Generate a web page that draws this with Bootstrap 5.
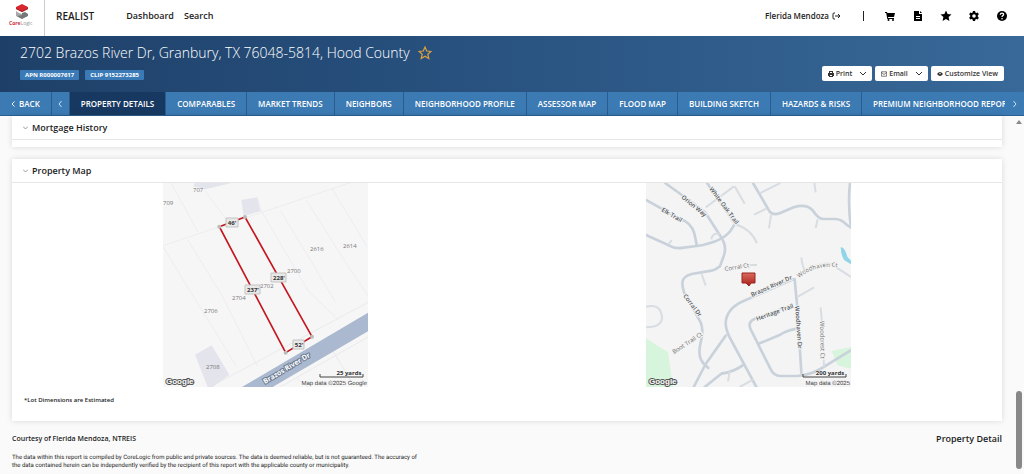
<!DOCTYPE html>
<html lang="en">
<head>
<meta charset="utf-8">
<meta name="viewport" content="width=device-width, initial-scale=1">
<title>Realist - Property Detail</title>
<link rel="stylesheet" href="https://cdn.jsdelivr.net/npm/bootstrap@5.3.0/dist/css/bootstrap.min.css">
<style>
body{font-family:"Open Sans","Noto Sans",sans-serif;font-size:8px;line-height:12px;color:#1c1c1c;background:#fafafa;overflow:hidden}
a{color:inherit;text-decoration:none}
svg{display:block;flex:none}
button{font:inherit;color:inherit}
.topbar{height:36px;background:#fff;padding-bottom:4px}
.logo-box{width:45px;height:36px;margin-bottom:-4px;border-right:1px solid #ccc}
.app-name{font-size:10px;line-height:16px;font-weight:600;margin-left:11px}
.main-links{font-size:9px;font-weight:600;margin-left:32px;gap:10px}
.user-link{font-weight:600;gap:3px}
.divider{width:1px;height:10px;background:#222;margin-left:22px}
.tool-links{gap:16px;margin-left:20px;margin-right:16px}
.tool-links a{width:12px}
.banner{height:56px;padding:6px 20px 0;background:linear-gradient(90deg,#1e4068,#28517f 45%,#386998)}
.banner h1{font-size:14px;line-height:21px;font-weight:300;color:#fff;margin:0}
.tags{gap:6px;margin-top:7px}
.tag{background:#3a7ab6;color:#fff;font-size:6px;line-height:10px;font-weight:700;border-radius:1px;padding:0 5px}
.acts{margin-top:24px;gap:3px}
.act{background:#fff;border:0;border-radius:2px;height:15px;padding:0 6px;gap:2px;font-size:7px;font-weight:600;color:#333;line-height:12px}
.chev{margin-left:6px}
.tabs{height:24px;background:#3b7ab3;color:#fff;font-size:8px;font-weight:600;border-bottom:1px solid #2b5f92}
.tabs a,.tabs button{display:flex;align-items:center;white-space:nowrap;flex:none;padding:0 11px;border:0;border-right:1px solid #2a5c8e;background:none}
.tabs .on{background:#173961}
.tabs button{padding:0;width:18px;justify-content:center}
.tabs .next{border:0;width:19px}
.content{padding:0 22px 0 12px}
.panel{background:#fff;box-shadow:0 0 6px #0002;margin-bottom:12px}
.panel-closed{padding-bottom:7px}
.panel h2{font-size:9px;line-height:12px;font-weight:600;height:24px;margin:0;padding:0 11px;gap:4px;border-bottom:1px solid #e6e6e6}
.maps{padding:0 12px}
.note{padding:7px 12px 15px;font-size:6px;font-weight:600}
.courtesy{font-size:7px;font-weight:600}
.doc-title{font-size:9px;font-weight:600}
.legal{font-family:Roboto,"Open Sans",sans-serif;font-size:6px;line-height:8px;margin:9px 0 0;text-rendering:geometricPrecision}
.track{width:10px;top:0;bottom:0;right:0}
.arrow-up{top:4px;right:2px}
.thumb{width:6px;height:78px;bottom:1px;right:2px;background:#888;border-radius:3px}
.place{font-family:"Open Sans",sans-serif;font-size:6px;fill:#777}
.street{font-family:"Open Sans",sans-serif;font-size:6px;font-weight:600;fill:#50565b;stroke:#f4f4f4;stroke-width:2px;paint-order:stroke}
.minor{font-weight:400;fill:#6c6c6c}
.road{font-size:7px;font-weight:700;fill:#fff;stroke:#68788f}
.dim{font-family:"Open Sans",sans-serif;font-size:6px;font-weight:700;fill:#333;text-anchor:middle}
.goog{font-family:"Liberation Sans",sans-serif;font-size:8px;font-weight:700;fill:#fff;stroke:#555;stroke-width:2px;paint-order:stroke}
.credit{font-family:"Liberation Sans",sans-serif;font-size:6px;fill:#444;text-anchor:end;text-rendering:geometricPrecision}
</style>
</head>
<body>
<header>
<div class="topbar d-flex align-items-center">
  <a href="#" class="logo-box d-flex justify-content-center" aria-label="CoreLogic">
    <svg width="44" height="36" viewBox="0 0 44 36"><path d="M22 4l6 3v2l-6 3-6-3V7z" fill="#d7282f"/><path d="M16 8l6 3 6-3v1l-6 3-6-3z" fill="#a91f27"/><path d="M16 11l3 2 3 1v5l-6-3z" fill="#aaa"/><path d="M22 13l3-1 3 2v2l-6 3-5-3 5-1z" fill="#777"/><text x="9" y="25" font-family="Open Sans" font-size="5" font-weight="700" fill="#c9303b">Core<tspan font-weight="400" fill="#999">Logic</tspan></text></svg>
  </a>
  <span class="app-name">REALIST</span>
  <nav class="main-links d-flex" aria-label="Main"><a href="#">Dashboard</a><a href="#">Search</a></nav>
  <a href="#" class="user-link ms-auto d-flex align-items-center">Flerida Mendoza
    <svg width="9" height="8" viewBox="0 0 9 8" fill="none" stroke="#222"><path d="M3 1H2Q1 1 1 2v4q0 1 1 1h1M3 4h5M6 2l2 2-2 2"/></svg></a>
  <span class="divider"></span>
  <div class="tool-links d-flex align-items-center">
    <a href="#" aria-label="Cart"><svg width="12" height="12" viewBox="0 0 12 12"><path d="M1 2h2l.3 1H11L10 7H4l.2 1H10v1H3.300L2.200 3H1z"/><circle cx="4.500" cy="10" r="1"/><circle cx="9" cy="10" r="1"/></svg></a>
    <a href="#" aria-label="Reports"><svg width="12" height="12" viewBox="0 0 12 12"><path fill-rule="evenodd" d="M2 1h5v3h3v7H2zm2 5v1h4V6zm0 2v1h4V8z"/><path d="M8 1l2 2H8z"/></svg></a>
    <a href="#" aria-label="Favorites"><svg width="12" height="12" viewBox="0 0 12 12"><path d="M6 .5l1.600 3.500 3.900.5-2.900 2.600.8 3.900L6 9.100 2.600 11l.8-3.900L.5 4.500 4.400 4z"/></svg></a>
    <a href="#" aria-label="Settings"><svg width="12" height="12" viewBox="0 0 12 12"><path fill-rule="evenodd" d="M5 1h2l.4 1.400 1 .6 1.400-.4 1 1.700-1 1.100v1.200l1 1.100-1 1.700L8.400 9l-1 .6L7 11H5l-.4-1.400-1-.6-1.400.4-1-1.700 1-1.100V5.400l-1-1.100 1-1.700 1.400.4 1-.6zm1 3.200a1.800 1.800 0 100 3.600 1.800 1.800 0 000-3.600z"/></svg></a>
    <a href="#" aria-label="Help"><svg width="12" height="12" viewBox="0 0 12 12"><circle cx="6" cy="6" r="5"/><path d="M4.300 4.700C4.400 2.500 7.800 2.700 7.600 4.600 7.500 5.600 6 5.700 6 7" fill="none" stroke="#fff" stroke-width="1.300"/><circle cx="6" cy="8.700" r=".8" fill="#fff"/></svg></a>
  </div>
</div>
<div class="banner d-flex justify-content-between">
  <div>
    <div class="d-flex align-items-center gap-2"><h1>2702 Brazos River Dr, Granbury, TX 76048-5814, Hood County</h1>
      <svg width="14" height="14" viewBox="0 0 14 14" fill="none" stroke="#dfa03c" stroke-width="1.200"><path d="M7 1l1.700 4 4.300.4-3.200 2.800 1 4.300L7 10.200 3.200 12.500l1-4.300L1 5.400 5.300 5z"/></svg></div>
    <div class="tags d-flex"><span class="tag">APN R000007617</span><span class="tag">CLIP 9152273285</span></div>
  </div>
  <div class="acts d-flex align-items-start">
    <button class="act d-flex align-items-center"><svg width="6" height="6" viewBox="0 0 6 6"><path fill="#333" fill-rule="evenodd" d="M1 0h4v2h1v3H5v1H1V5H0V2h1zm1 1v1h2V1zm0 3v1h2V4z"/></svg>Print<svg class="chev" width="6" height="4" fill="none" stroke="#333"><path d="M0 0l3 3 3-3"/></svg></button>
    <button class="act d-flex align-items-center"><svg width="6" height="6" viewBox="0 0 6 6" fill="none" stroke="#444" stroke-width=".7"><path d="M.4.8h5.200v4.400H.4zM.4 1.500L3 3.500l2.600-2"/></svg>Email<svg class="chev" width="6" height="4" fill="none" stroke="#333"><path d="M0 0l3 3 3-3"/></svg></button>
    <button class="act d-flex align-items-center"><svg width="6" height="6" viewBox="0 0 6 6"><path d="M0 3q3-4 6 0-3 4-6 0z" fill="#333"/><circle cx="3" cy="2.500" r=".7" fill="#fff"/></svg>Customize View</button>
  </div>
</div>
<nav class="tabs d-flex" aria-label="Report sections">
  <a href="#" class="back"><svg class="me-1" width="4" height="6" fill="none" stroke="#fff"><path d="M3.500.5L1 3l2.500 2.500"/></svg>BACK</a>
  <button aria-label="Previous tabs"><svg width="4" height="6" fill="none" stroke="#cfe0f0"><path d="M3.500 0L1 3l2.500 3"/></svg></button>
  <div class="d-flex overflow-hidden flex-grow-1">
    <a href="#" class="on">PROPERTY DETAILS</a><a href="#">COMPARABLES</a><a href="#">MARKET TRENDS</a><a href="#">NEIGHBORS</a><a href="#">NEIGHBORHOOD PROFILE</a><a href="#">ASSESSOR MAP</a><a href="#">FLOOD MAP</a><a href="#">BUILDING SKETCH</a><a href="#">HAZARDS &amp; RISKS</a><a href="#">PREMIUM NEIGHBORHOOD REPOR</a>
  </div>
  <button class="next" aria-label="Next tabs"><svg width="4" height="6" fill="none" stroke="#cfe0f0"><path d="M.5 0L3 3 .5 6"/></svg></button>
</nav>
</header>
<main class="content position-relative">
  <section class="panel panel-closed"><h2 class="d-flex align-items-center"><svg width="5" height="4" fill="none" stroke="#999"><path d="M0 .5l2.500 2.500L5 .5"/></svg>Mortgage History</h2></section>
  <section class="panel"><h2 class="d-flex align-items-center"><svg width="5" height="4" fill="none" stroke="#999"><path d="M0 .5l2.500 2.500L5 .5"/></svg>Property Map</h2>
    <div class="maps"><div class="row g-0">
      <div class="col-6 d-flex justify-content-center">
      <svg width="205" height="204" viewBox="0 0 205 204" role="img" aria-label="Lot map">
        <rect width="205" height="204" fill="#f6f6f7"/>
        <svg width="205" height="204" viewBox="9 9 615 612" fill="none">
          <path d="M104 9h110l-78 19-36-9zM244 60l48-8 9 42-50 14zM105 524l50-28 53 88-50 37h-15z" fill="#e3e4ec"/>
          <path d="M9 197L178 140 624 -10M33 9L68 72 113 155M133 30l75 100M9 200l70 115 90 145 60 100M82 178l105 170 105 210M290 52l15 42 140 240 90 85M362 93l100 165 65 110M440 62l120 190 64 95M516 25l105 175M178 140l200 380" stroke="#e8e9ec" stroke-width="2"/>
          <path d="M150 621L624 367M360 621l264-150M410 595l35 26M520 515l60 100" stroke="#e2e4e7" stroke-width="2"/>
          <path d="M624 398v56L338 621h-92z" fill="#aab9cf"/>
          <path d="M178 140l77-29 201 359-79 48z" stroke="#c5161f" stroke-width="5"/>
          <g fill="#bbb"><circle cx="178" cy="140" r="6"/><circle cx="255" cy="111" r="6"/><circle cx="456" cy="470" r="6"/><circle cx="377" cy="518" r="6"/></g>
        </svg>
        <g class="place"><text x="30" y="9">707</text><text x="0" y="22">709</text><text x="147" y="68">2616</text><text x="180" y="65">2614</text><text x="124" y="90">2700</text><text x="97" y="105">2702</text><text x="69" y="117">2704</text><text x="41" y="130">2706</text><text x="43" y="186">2708</text></g>
        <g fill="#e8e8e8" stroke="#c4c4c4"><path d="M63 35h12v9H63zM108 90h15v9h-15zM82 102h15v9H82zM130 157h11v9h-11z"/></g>
        <g class="dim"><text x="69" y="42">46'</text><text x="116" y="97">228'</text><text x="90" y="109">237'</text><text x="136" y="164">52'</text></g>
        <text class="street road" transform="translate(102 201) rotate(-31)">Brazos River Dr</text>
        <text class="goog" x="3" y="201">Google</text>
        <path d="M157 191v3h43v-3" fill="none" stroke="#444"/><text class="dim" x="186" y="192">25 yards</text>
        <text class="credit" x="204" y="202">Map data ©2025 Google</text>
      </svg></div>
      <div class="col-6 d-flex justify-content-center">
      <svg width="205" height="204" viewBox="0 0 205 204" role="img" aria-label="Area map">
        <rect width="205" height="204" fill="#f4f4f5"/>
        <svg width="205" height="204" viewBox="9 9 615 612" fill="none">
          <path d="M9 475l66 42 15 104H9zM566 513l58-12v65l-40-10z" fill="#d6f5dc"/>
          <path d="M593 202q12-2 20 28l11 12v11l-20-12q-10-14-11-39z" fill="#90d5e8"/>
          <g stroke="#c9d2db" stroke-width="8" stroke-linejoin="round" stroke-linecap="round">
            <path d="M9 165l68 31q20 12 45 7l40-5q75-12 100-45l14-22-84-122M66 9l38 27 82 60 48 75q20 30 7 60l-10 28q-10 9-25 13l-60 10q-26 7-28 25 0 15 5 30l50 90q10 25 0 60-12 50 15 69l8 8M9 60l105 58q30 10 40 42l7 34M330 9l50 86q10 12 30 5l42-18q38-12 58 10 16 25 32 25h35q18 0 35 18l12 8q-10-70-3-134"/>
            <path d="M450 298l-150 66q-49 22-52 64 0 20 12 44l80 149M248 467l-60 85-36 69M446 376l-110 40q-22 8-14 30l60 120q10 22 30 22h50q40-3 70-21l90-55M455 298l8 85 12 195M350 490l60-25q20-14 55-20M185 621l50-40q40-6 68-28"/>
          </g>
          <g stroke="#d8dde2" stroke-width="6"><path d="M188 82l85-63M275 19l30 52M350 40l62-31M384 105l-6 40M370 86l-37 18M524 118l-6 26M514 9l4 28M274 132q50 14 68 58M205 178q2-20 25-16M78 192l8-12M242 267l70-12h30M176 282l12 35M475 233q3 25 10 38 70-36 96-8l43 28M465 350l48-28M533 382l5 60 5 120M260 574l-5 30M290 621l40-22M9 380q45-10 48 32 0 30-48 30"/></g>
        </svg>
        <g class="street">
          <text transform="translate(15 28) rotate(30)">Elk Trail</text><text transform="translate(35 15) rotate(39)">Orion Way</text><text transform="translate(63 6) rotate(53)">White Oak Trail</text>
          <text class="minor" transform="translate(79 88) rotate(-9)">Corral Ct</text>
          <path id="bend" d="M153 95Q172 79 200 86" fill="none" stroke="none"/><text class="minor"><textPath href="#bend">Woodhaven Ct</textPath></text>
          <text transform="translate(106 114) rotate(-24)">Brazos River Dr</text><text transform="translate(37 113) rotate(53)">Corral Dr</text><text transform="translate(111 138) rotate(-20)">Heritage Trail</text>
          <text transform="translate(149 123) rotate(86)">Woodhaven Dr</text><text class="minor" transform="translate(174 138) rotate(89)">Woodcrest Ct</text><text class="minor" transform="translate(28 171) rotate(-33)">Boot Trail Ct</text>
        </g>
        <defs><linearGradient id="pin" x2="0" y2="1"><stop stop-color="#d96a5e"/><stop offset="1" stop-color="#a81e18"/></linearGradient></defs>
        <path d="M96 90h13v10h-4l-2 3-3-3h-4z" fill="url(#pin)" stroke="#99251e"/>
        <text class="goog" x="3" y="201">Google</text>
        <path d="M157 191v3h43v-3" fill="none" stroke="#444"/><text class="dim" x="184" y="192">200 yards</text>
        <text class="credit" x="204" y="202">Map data ©2025</text>
      </svg></div>
    </div></div>
    <div class="note">*Lot Dimensions are Estimated</div>
  </section>
  <footer>
    <div class="d-flex justify-content-between align-items-center"><span class="courtesy">Courtesy of Flerida Mendoza, NTREIS</span><span class="doc-title">Property Detail</span></div>
    <p class="legal">The data within this report is compiled by CoreLogic from public and private sources. The data is deemed reliable, but is not guaranteed. The accuracy of<br>the data contained herein can be independently verified by the recipient of this report with the applicable county or municipality.</p>
  </footer>
  <div class="track position-absolute"><svg class="arrow-up position-absolute" width="6" height="4" fill="#888"><path d="M0 4l3-4 3 4z"/></svg><div class="thumb position-absolute"></div></div>
</main>
<script src="https://cdn.jsdelivr.net/npm/bootstrap@5.3.0/dist/js/bootstrap.bundle.min.js"></script>
</body>
</html>
